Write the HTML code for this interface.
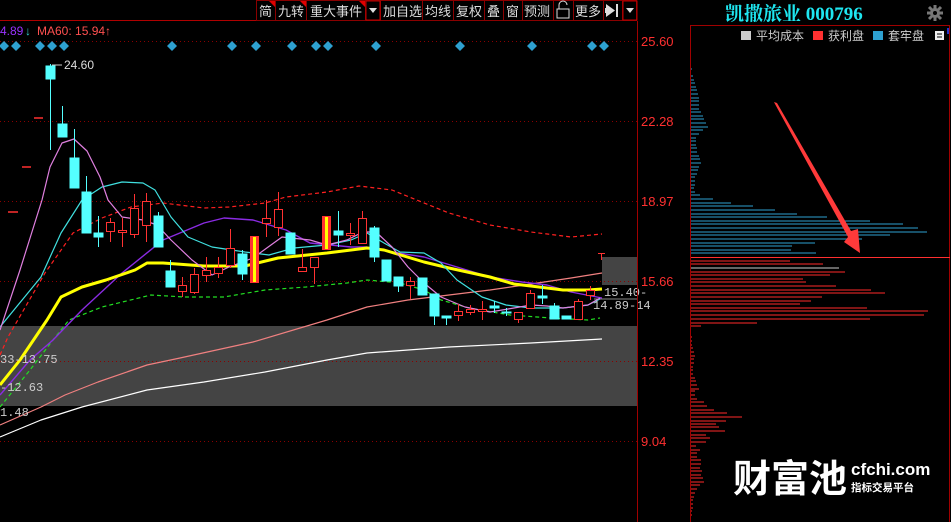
<!DOCTYPE html>
<html><head><meta charset="utf-8"><style>
html,body{margin:0;padding:0;background:#000;width:951px;height:522px;overflow:hidden}
svg{display:block}
text{font-family:"Liberation Sans","Noto Sans CJK SC",sans-serif}
</style></head><body>
<svg width="951" height="522" viewBox="0 0 951 522" xmlns="http://www.w3.org/2000/svg">
<rect width="951" height="522" fill="#000"/>
<rect x="0" y="326" width="637" height="80" fill="#444"/>
<rect x="602" y="257" width="35" height="28" fill="#444"/>
<line x1="594" y1="299" x2="637" y2="299" stroke="#888" stroke-width="1"/>
<g stroke="#8a0000" stroke-width="1" stroke-dasharray="1 3">
<line x1="0" y1="41.5" x2="637" y2="41.5"/>
<line x1="0" y1="121.5" x2="637" y2="121.5"/>
<line x1="0" y1="201.5" x2="637" y2="201.5"/>
<line x1="0" y1="281.5" x2="637" y2="281.5"/>
<line x1="0" y1="361.5" x2="637" y2="361.5"/>
<line x1="0" y1="441.5" x2="637" y2="441.5"/>
</g>
<line x1="0" y1="20.5" x2="637" y2="20.5" stroke="#b00000"/>
<g stroke="#8a0000" fill="none">
<rect x="256.5" y="0.5" width="380" height="20"/>
<line x1="275.5" y1="0" x2="275.5" y2="20"/><line x1="306.5" y1="0" x2="306.5" y2="20"/>
<line x1="365.5" y1="0" x2="365.5" y2="20"/><line x1="380.5" y1="0" x2="380.5" y2="20"/>
<line x1="422.5" y1="0" x2="422.5" y2="20"/><line x1="453.5" y1="0" x2="453.5" y2="20"/>
<line x1="484.5" y1="0" x2="484.5" y2="20"/><line x1="503.5" y1="0" x2="503.5" y2="20"/>
<line x1="522.5" y1="0" x2="522.5" y2="20"/><line x1="553.5" y1="0" x2="553.5" y2="20"/>
<line x1="573.5" y1="0" x2="573.5" y2="20"/><line x1="603.5" y1="0" x2="603.5" y2="20"/>
<line x1="622.5" y1="0" x2="622.5" y2="20"/>
</g>
<rect x="366" y="1" width="14" height="19" fill="none" stroke="#c00000"/>
<rect x="623" y="1" width="14" height="19" fill="none" stroke="#c00000"/>
<g fill="#e00000"><polygon points="269,1 275,1 275,7"/><polygon points="300,1 306,1 306,7"/><polygon points="359,1 365,1 365,7"/></g>
<g fill="#ddd" font-size="13">
<text x="259" y="16">简</text><text x="278" y="16">九转</text><text x="310" y="16">重大事件</text>
<text x="383" y="16">加自选</text><text x="425" y="16">均线</text><text x="456" y="16">复权</text>
<text x="487" y="16">叠</text><text x="506" y="16">窗</text><text x="524" y="16">预测</text>
<text x="575" y="16">更多</text>
</g>
<polygon points="369,8 377,8 373,13" fill="#ddd"/><polygon points="626,8 634,8 630,13" fill="#ddd"/>
<rect x="557" y="9" width="12" height="9" fill="none" stroke="#ddd"/>
<path d="M559 9 V5 a4 4 0 0 1 8 0" fill="none" stroke="#ddd"/>
<polygon points="606,4 606,17 615,10.5" fill="#ddd"/><rect x="605" y="8" width="4" height="5" fill="#ddd"/><rect x="616" y="4" width="2" height="13" fill="#ddd"/>
<text x="0" y="35" font-size="12" fill="#9933ff">4.89</text><text x="25" y="35" font-size="12" fill="#33cccc">↓</text>
<text x="37" y="35" font-size="12" fill="#ff5050">MA60: 15.94↑</text>
<g fill="#2ea0d0">
<path d="M4 41l5 5-5 5-5-5z"/><path d="M16 41l5 5-5 5-5-5z"/><path d="M40 41l5 5-5 5-5-5z"/><path d="M52 41l5 5-5 5-5-5z"/><path d="M64 41l5 5-5 5-5-5z"/><path d="M172 41l5 5-5 5-5-5z"/><path d="M232 41l5 5-5 5-5-5z"/><path d="M256 41l5 5-5 5-5-5z"/><path d="M292 41l5 5-5 5-5-5z"/><path d="M316 41l5 5-5 5-5-5z"/><path d="M328 41l5 5-5 5-5-5z"/><path d="M376 41l5 5-5 5-5-5z"/><path d="M460 41l5 5-5 5-5-5z"/><path d="M532 41l5 5-5 5-5-5z"/><path d="M592 41l5 5-5 5-5-5z"/><path d="M604 41l5 5-5 5-5-5z"/>
</g>
<g stroke-width="1.5"><line x1="34" y1="118" x2="43" y2="118" stroke="#ff3030"/><line x1="22" y1="167" x2="31" y2="167" stroke="#ff3030"/><line x1="8" y1="212" x2="18" y2="212" stroke="#ff3030"/></g>
<g fill="none" stroke-linejoin="round">
<polyline stroke="#ffffff" stroke-width="1.2" points="0,437 41,420 82,407 147,390 204,382 265,372 327,360 367,353 449,347 531,343 602,339"/>
<polyline stroke="#f08080" stroke-width="1.2" points="0,425 41,407 65,395 98,382 147,365 180,358 253,342 327,320 367,307 408,300 449,295 490,290 531,284 571,278 602,273"/>
<polyline stroke="#ff2020" stroke-width="1.2" stroke-dasharray="4 3" points="0,355 8,337 45,273 73,233 102,218 131,207 163,203 204,208 229,207 265,203 286,197 327,192 359,186 392,190 449,213 490,225 531,232 571,237 602,234"/>
<polyline stroke="#22dd22" stroke-width="1.2" stroke-dasharray="4 3" points="0,407 30,370 53,340 69,320 102,307 151,295 184,297 224,297 265,290 306,287 347,283 367,280 400,283 424,290 441,300 469,308 510,315 551,318 588,320 600,318"/>
<polyline stroke="#8a2be2" stroke-width="1.4" points="0,395 30,360 53,340 82,310 122,273 163,240 204,223 224,218 253,220 286,230 310,243 351,247 367,247 392,252 424,257 457,267 490,277 522,282 547,285 571,292 602,298"/>
<polyline stroke="#ffff00" stroke-width="3" points="0,385 20,360 47,320 61,297 82,287 106,280 135,270 147,263 163,263 204,266 245,266 278,258 327,253 367,248 384,250 424,262 449,268 490,277 514,284 539,287 563,290 588,290 602,289"/>
<polyline stroke="#40e0e0" stroke-width="1.2" points="0,327 41,277 61,233 82,200 102,187 122,182 143,183 155,190 171,217 188,237 212,247 245,252 269,255 294,248 327,245 351,240 367,233 384,243 400,252 424,253 441,263 457,280 482,297 506,305 531,308 563,308 588,305 600,299"/>
<polyline stroke="#e080e0" stroke-width="1.2" points="0,330 20,270 42,200 50,167 62,143 74,139 87,151 100,177 108,200 122,217 143,220 157,225 171,240 192,260 212,275 229,267 253,258 282,237 310,240 327,245 347,240 363,232 376,232 392,247 408,267 424,283 441,297 465,307 490,312 514,308 531,305 547,306 563,308 588,305 600,298"/>
</g>
<g fill="#54ffff" stroke="#54ffff" stroke-width="1">
<line x1="50.5" y1="64" x2="50.5" y2="150"/><rect x="46" y="66" width="9" height="13"/>
<line x1="62.5" y1="106" x2="62.5" y2="137"/><rect x="58" y="124" width="9" height="13"/>
<line x1="74.5" y1="129" x2="74.5" y2="188"/><rect x="70" y="158" width="9" height="30"/>
<line x1="86.5" y1="176" x2="86.5" y2="233"/><rect x="82" y="192" width="9" height="41"/>
<line x1="98.5" y1="216" x2="98.5" y2="247"/><rect x="94" y="233" width="9" height="4"/>
<line x1="158.5" y1="212" x2="158.5" y2="247"/><rect x="154" y="216" width="9" height="31"/>
<line x1="170.5" y1="260" x2="170.5" y2="287"/><rect x="166" y="271" width="9" height="16"/>
<line x1="242.5" y1="250" x2="242.5" y2="280"/><rect x="238" y="254" width="9" height="20"/>
<rect x="286" y="233" width="9" height="21"/>
<line x1="338.5" y1="211" x2="338.5" y2="247"/><rect x="334" y="231" width="9" height="4"/>
<line x1="374.5" y1="226" x2="374.5" y2="262"/><rect x="370" y="228" width="9" height="29"/>
<rect x="382" y="260" width="9" height="21"/>
<line x1="398.5" y1="277" x2="398.5" y2="292"/><rect x="394" y="277" width="9" height="9"/>
<rect x="418" y="278" width="9" height="17"/>
<line x1="434.5" y1="294" x2="434.5" y2="325"/><rect x="430" y="294" width="9" height="22"/>
<line x1="446.5" y1="316" x2="446.5" y2="325"/><rect x="442" y="316" width="9" height="2"/>
<line x1="494.5" y1="301" x2="494.5" y2="313"/><rect x="490" y="306" width="9" height="2"/>
<line x1="506.5" y1="308" x2="506.5" y2="316"/><rect x="502" y="312" width="9" height="1"/>
<line x1="542.5" y1="285" x2="542.5" y2="304"/><rect x="538" y="296" width="9" height="2"/>
<line x1="554.5" y1="303" x2="554.5" y2="319"/><rect x="550" y="306" width="9" height="13"/>
<rect x="562" y="316" width="9" height="3"/>
</g>
<g fill="none" stroke="#ff3232" stroke-width="1">
<line x1="110.5" y1="218" x2="110.5" y2="242"/><rect x="106.5" y="222.5" width="8" height="9" fill="#000"/>
<line x1="122.5" y1="218" x2="122.5" y2="247"/><rect x="118.5" y="230.5" width="8" height="2" fill="#000"/>
<line x1="134.5" y1="194" x2="134.5" y2="238"/><rect x="130.5" y="208.5" width="8" height="26" fill="#000"/>
<line x1="146.5" y1="193" x2="146.5" y2="242"/><rect x="142.5" y="201.5" width="8" height="24" fill="#000"/>
<line x1="182.5" y1="277" x2="182.5" y2="297"/><rect x="178.5" y="285.5" width="8" height="6" fill="#000"/>
<line x1="194.5" y1="268" x2="194.5" y2="294"/><rect x="190.5" y="274.5" width="8" height="18" fill="#000"/>
<line x1="206.5" y1="257" x2="206.5" y2="282"/><rect x="202.5" y="270.5" width="8" height="5" fill="#000"/>
<line x1="218.5" y1="257" x2="218.5" y2="278"/><rect x="214.5" y="267.5" width="8" height="6" fill="#000"/>
<line x1="230.5" y1="229" x2="230.5" y2="268"/><rect x="226.5" y="248.5" width="8" height="17" fill="#000"/>
<line x1="266.5" y1="200" x2="266.5" y2="237"/><rect x="262.5" y="218.5" width="8" height="5" fill="#000"/>
<line x1="278.5" y1="192" x2="278.5" y2="236"/><rect x="274.5" y="209.5" width="8" height="18" fill="#000"/>
<line x1="302.5" y1="249" x2="302.5" y2="271"/><rect x="298.5" y="267.5" width="8" height="4" fill="#000"/>
<line x1="314.5" y1="257" x2="314.5" y2="284"/><rect x="310.5" y="257.5" width="8" height="10" fill="#000"/>
<line x1="350.5" y1="223" x2="350.5" y2="245"/><rect x="346.5" y="233.5" width="8" height="2" fill="#000"/>
<line x1="362.5" y1="211" x2="362.5" y2="243"/><rect x="358.5" y="218.5" width="8" height="25" fill="#000"/>
<line x1="410.5" y1="277" x2="410.5" y2="299"/><rect x="406.5" y="281.5" width="8" height="4" fill="#000"/>
<line x1="458.5" y1="304" x2="458.5" y2="321"/><rect x="454.5" y="311.5" width="8" height="4" fill="#000"/>
<line x1="470.5" y1="305" x2="470.5" y2="315"/><rect x="466.5" y="309.5" width="8" height="3" fill="#000"/>
<line x1="482.5" y1="301" x2="482.5" y2="320"/><rect x="478.5" y="309.5" width="8" height="2" fill="#000"/>
<line x1="518.5" y1="312" x2="518.5" y2="323"/><rect x="514.5" y="312.5" width="8" height="7" fill="#000"/>
<line x1="530.5" y1="290" x2="530.5" y2="308"/><rect x="526.5" y="293.5" width="8" height="15" fill="#000"/>
<line x1="578.5" y1="299" x2="578.5" y2="319"/><rect x="574.5" y="301.5" width="8" height="18" fill="#000"/>
<line x1="590.5" y1="286" x2="590.5" y2="300"/><rect x="586.5" y="290.5" width="8" height="5" fill="#000"/>
<line x1="601.5" y1="253" x2="601.5" y2="260"/><line x1="598" y1="253.5" x2="605" y2="253.5"/>
</g>
<rect x="250" y="236" width="9" height="47" fill="#ff3232"/><rect x="253" y="237" width="3" height="45" fill="#ffff00"/>
<rect x="322" y="216" width="9" height="34" fill="#ff3232"/><rect x="325" y="217" width="3" height="32" fill="#ffff00"/>
<line x1="52" y1="65" x2="62" y2="65" stroke="#ccc"/>
<text x="64" y="69" font-size="12" fill="#ddd">24.60</text>
<g font-size="12" fill="#ccc">
<text x="0" y="363" style="font-family:'Liberation Mono',monospace">33-13.75</text>
<text x="0" y="391" style="font-family:'Liberation Mono',monospace">-12.63</text>
<text x="0" y="416" style="font-family:'Liberation Mono',monospace">1.48</text>
<text x="604" y="296" style="font-family:'Liberation Mono',monospace">15.40-</text>
<text x="593" y="309" style="font-family:'Liberation Mono',monospace">14.89-14</text>
</g>
<line x1="637.5" y1="21" x2="637.5" y2="522" stroke="#a00000"/>
<g font-size="13" fill="#ff3030">
<text x="641" y="46">25.60</text><text x="641" y="126">22.28</text><text x="641" y="206">18.97</text>
<text x="641" y="286">15.66</text><text x="641" y="366">12.35</text><text x="641" y="446">9.04</text>
</g>
<text x="725" y="20" font-size="19" font-weight="bold" fill="#1ee6f0" style="font-family:'Liberation Serif','Noto Serif CJK SC',serif">凯撒旅业 000796</text>
<g fill="#777"><circle cx="935" cy="13" r="5"/><g stroke="#777" stroke-width="3"><line x1="935" y1="5" x2="935" y2="21"/><line x1="927" y1="13" x2="943" y2="13"/><line x1="929" y1="7" x2="941" y2="19"/><line x1="941" y1="7" x2="929" y2="19"/></g><circle cx="935" cy="13" r="2" fill="#000"/></g>
<line x1="690" y1="25.5" x2="950" y2="25.5" stroke="#a00000"/>
<line x1="690.5" y1="25" x2="690.5" y2="522" stroke="#a00000"/>
<line x1="949.5" y1="25" x2="949.5" y2="522" stroke="#a00000"/>
<rect x="741" y="31" width="10" height="9" fill="#ccc"/><text x="756" y="40" font-size="12" fill="#ccc">平均成本</text>
<rect x="813" y="31" width="10" height="9" fill="#ff3030"/><text x="828" y="40" font-size="12" fill="#ccc">获利盘</text>
<rect x="873" y="31" width="10" height="9" fill="#2ea0d0"/><text x="888" y="40" font-size="12" fill="#ccc">套牢盘</text>
<rect x="935" y="31" width="9" height="9" fill="#eee"/><line x1="937" y1="34" x2="942" y2="34" stroke="#000"/><line x1="937" y1="37" x2="942" y2="37" stroke="#000"/>
<rect x="947" y="28" width="2" height="6" fill="#2233cc"/>
<g stroke="#2ea0d0" stroke-width="1">
<line x1="691" y1="69" x2="692" y2="69"/><line x1="691" y1="76" x2="693" y2="76"/><line x1="691" y1="80" x2="694" y2="80"/><line x1="691" y1="83" x2="695" y2="83"/><line x1="691" y1="87" x2="696" y2="87"/><line x1="691" y1="90" x2="697" y2="90"/><line x1="691" y1="94" x2="698" y2="94"/><line x1="691" y1="98" x2="699" y2="98"/><line x1="691" y1="101" x2="699" y2="101"/><line x1="691" y1="105" x2="699" y2="105"/><line x1="691" y1="109" x2="699" y2="109"/><line x1="691" y1="112" x2="701" y2="112"/><line x1="691" y1="116" x2="703" y2="116"/><line x1="691" y1="119" x2="704" y2="119"/><line x1="691" y1="123" x2="706" y2="123"/><line x1="691" y1="127" x2="708" y2="127"/><line x1="691" y1="130" x2="703" y2="130"/><line x1="691" y1="134" x2="699" y2="134"/><line x1="691" y1="138" x2="696" y2="138"/><line x1="691" y1="141" x2="696" y2="141"/><line x1="691" y1="145" x2="696" y2="145"/><line x1="691" y1="148" x2="697" y2="148"/><line x1="691" y1="152" x2="697" y2="152"/><line x1="691" y1="156" x2="699" y2="156"/><line x1="691" y1="159" x2="700" y2="159"/><line x1="691" y1="163" x2="701" y2="163"/><line x1="691" y1="167" x2="699" y2="167"/><line x1="691" y1="170" x2="698" y2="170"/><line x1="691" y1="174" x2="697" y2="174"/><line x1="691" y1="177" x2="695" y2="177"/><line x1="691" y1="181" x2="695" y2="181"/><line x1="691" y1="185" x2="695" y2="185"/><line x1="691" y1="188" x2="694" y2="188"/><line x1="691" y1="192" x2="695" y2="192"/><line x1="691" y1="195" x2="700" y2="195"/><line x1="691" y1="199" x2="713" y2="199"/><line x1="691" y1="203" x2="731" y2="203"/><line x1="691" y1="206" x2="753" y2="206"/><line x1="691" y1="210" x2="775" y2="210"/><line x1="691" y1="214" x2="797" y2="214"/><line x1="691" y1="217" x2="827" y2="217"/><line x1="691" y1="221" x2="870" y2="221"/><line x1="691" y1="224" x2="903" y2="224"/><line x1="691" y1="228" x2="918" y2="228"/><line x1="691" y1="232" x2="927" y2="232"/><line x1="691" y1="235" x2="890" y2="235"/><line x1="691" y1="239" x2="862" y2="239"/><line x1="691" y1="243" x2="815" y2="243"/><line x1="691" y1="246" x2="792" y2="246"/><line x1="691" y1="250" x2="791" y2="250"/><line x1="691" y1="253" x2="816" y2="253"/>
</g>
<line x1="691" y1="257.5" x2="950" y2="257.5" stroke="#ff3030"/>
<line x1="691" y1="268" x2="839" y2="268" stroke="#ccc"/>
<g stroke="#ff2a2a" stroke-width="1">
<line x1="691" y1="261" x2="790" y2="261"/><line x1="691" y1="264" x2="823" y2="264"/><line x1="691" y1="272" x2="845" y2="272"/><line x1="691" y1="275" x2="830" y2="275"/><line x1="691" y1="279" x2="803" y2="279"/><line x1="691" y1="282" x2="806" y2="282"/><line x1="691" y1="286" x2="836" y2="286"/><line x1="691" y1="290" x2="871" y2="290"/><line x1="691" y1="293" x2="885" y2="293"/><line x1="691" y1="297" x2="822" y2="297"/><line x1="691" y1="301" x2="811" y2="301"/><line x1="691" y1="304" x2="800" y2="304"/><line x1="691" y1="308" x2="867" y2="308"/><line x1="691" y1="311" x2="928" y2="311"/><line x1="691" y1="315" x2="924" y2="315"/><line x1="691" y1="319" x2="870" y2="319"/><line x1="691" y1="323" x2="757" y2="323"/><line x1="691" y1="326" x2="701" y2="326"/>
<line x1="691" y1="337" x2="692" y2="337"/><line x1="691" y1="341" x2="692" y2="341"/><line x1="691" y1="345" x2="692" y2="345"/><line x1="691" y1="348" x2="693" y2="348"/><line x1="691" y1="352" x2="694" y2="352"/><line x1="691" y1="356" x2="695" y2="356"/><line x1="691" y1="359" x2="694" y2="359"/><line x1="691" y1="363" x2="694" y2="363"/><line x1="691" y1="367" x2="693" y2="367"/><line x1="691" y1="370" x2="693" y2="370"/><line x1="691" y1="374" x2="693" y2="374"/><line x1="691" y1="378" x2="695" y2="378"/><line x1="691" y1="381" x2="696" y2="381"/><line x1="691" y1="385" x2="697" y2="385"/><line x1="691" y1="389" x2="699" y2="389"/><line x1="691" y1="391" x2="695" y2="391"/><line x1="691" y1="395" x2="695" y2="395"/><line x1="691" y1="399" x2="697" y2="399"/><line x1="691" y1="402" x2="704" y2="402"/><line x1="691" y1="406" x2="707" y2="406"/><line x1="691" y1="410" x2="714" y2="410"/><line x1="691" y1="413" x2="727" y2="413"/><line x1="691" y1="417" x2="742" y2="417"/><line x1="691" y1="421" x2="726" y2="421"/><line x1="691" y1="424" x2="716" y2="424"/><line x1="691" y1="427" x2="719" y2="427"/><line x1="691" y1="431" x2="725" y2="431"/><line x1="691" y1="435" x2="706" y2="435"/><line x1="691" y1="438" x2="710" y2="438"/><line x1="691" y1="442" x2="706" y2="442"/><line x1="691" y1="446" x2="696" y2="446"/><line x1="691" y1="450" x2="700" y2="450"/><line x1="691" y1="453" x2="697" y2="453"/><line x1="691" y1="457" x2="697" y2="457"/><line x1="691" y1="460" x2="701" y2="460"/><line x1="691" y1="464" x2="701" y2="464"/><line x1="691" y1="468" x2="700" y2="468"/><line x1="691" y1="471" x2="702" y2="471"/><line x1="691" y1="475" x2="701" y2="475"/><line x1="691" y1="478" x2="703" y2="478"/><line x1="691" y1="482" x2="704" y2="482"/><line x1="691" y1="485" x2="700" y2="485"/><line x1="691" y1="489" x2="697" y2="489"/><line x1="691" y1="493" x2="695" y2="493"/><line x1="691" y1="497" x2="694" y2="497"/><line x1="691" y1="500" x2="693" y2="500"/><line x1="691" y1="504" x2="693" y2="504"/><line x1="691" y1="508" x2="693" y2="508"/><line x1="691" y1="511" x2="692" y2="511"/><line x1="691" y1="515" x2="692" y2="515"/>
</g>
<polygon points="774,102 777,103 851,231 858,229 860,253 844,242 848,237 775,104" fill="#ff3a3a"/>
<text x="733" y="492" font-size="38" font-weight="bold" fill="#fff" style="font-family:'Noto Sans CJK SC',sans-serif">财富池</text>
<text x="851" y="475" font-size="17" font-weight="bold" fill="#fff">cfchi.com</text>
<text x="851" y="491" font-size="10.5" font-weight="bold" fill="#fff" style="font-family:'Noto Sans CJK SC',sans-serif">指标交易平台</text>
</svg>
</body></html>
